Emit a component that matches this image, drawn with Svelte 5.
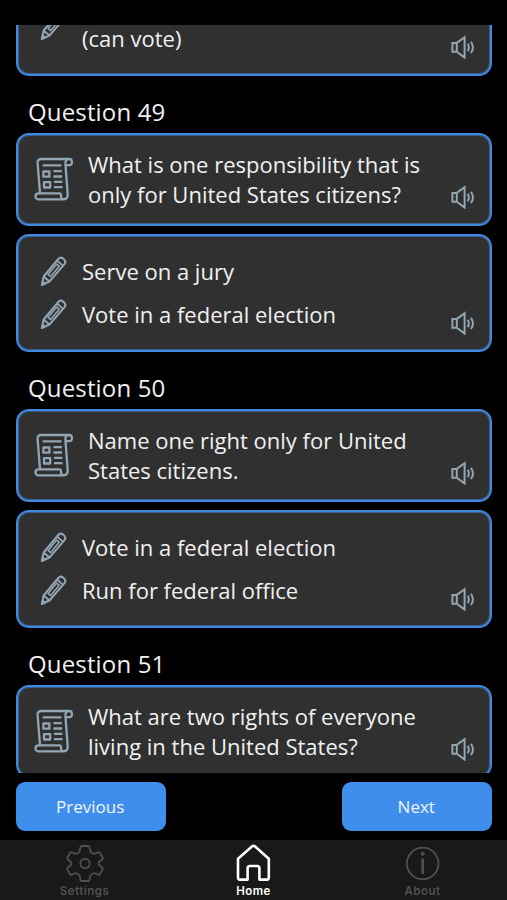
<script>
  const answersBefore = [{ text: '(can vote)', continued: true }];
  const questions = [
    {
      number: 49,
      lines: ['What is one responsibility that is', 'only for United States citizens?'],
      answers: [{ text: 'Serve on a jury' }, { text: 'Vote in a federal election' }]
    },
    {
      number: 50,
      lines: ['Name one right only for United', 'States citizens.'],
      answers: [{ text: 'Vote in a federal election' }, { text: 'Run for federal office' }]
    },
    {
      number: 51,
      lines: ['What are two rights of everyone', 'living in the United States?'],
      answers: []
    }
  ];

  // Right half of the gear outline; the left half is its mirror image.
  const gearHalf =
    'M19 2H22.2Q23.300 2 23.500 3.100L24.300 7Q24.500 8 25.300 8.500L27 9.500Q27.800 10 28.700 9.700L32.300 8.400Q33.400 8 34 9L36.600 13.500Q37.200 14.500 36.300 15.200L33.400 17.700Q32.600 18.400 32.600 19.500Q32.600 20.600 33.400 21.300L36.300 23.800Q37.200 24.500 36.600 25.500L34 30Q33.400 31 32.300 30.600L28.700 29.300Q27.800 29 27 29.500L25.300 30.500Q24.500 31 24.300 32L23.500 35.900Q23.300 37 22.200 37H19';
</script>

{#snippet speaker()}
  <svg class="speaker" viewBox="0 0 24 24" width="24" height="24">
    <path d="M1.400 7.900h4.400v8.800H1.400zM5.800 7.900 13.600 2.200v20.400L5.800 16.700" />
    <path d="M16.700 8.700c1.400 2.200 1.400 5.200 0 7.400M19.900 6.800c2.500 3.400 2.500 7.800 0 11.200" />
  </svg>
{/snippet}

{#snippet scroll()}
  <svg class="scroll" viewBox="0 0 40 44" width="40" height="44">
    <path d="M31.600 8.200h4.200c2.800 0 3.200-6.200-.6-6.200H7.400C4.600 2 3.400 3.600 3.600 6L6 36.200" />
    <path d="M35.200 2c-3 0-4 2-3.800 4.600l2.300 30.800c.2 3.200-1.600 5-4.600 5H4.800C.4 42.400.4 36.400 4.800 36.400H25.600c1.200 0 1.400 1 1.400 2.600 0 1.800.8 3.400 2.800 3.400" />
    <path d="M8.600 8.400H27.400M19.400 14.200h8.400M19.400 19.500h8.600M20 24.800h8.400M20 30.100h8.600M9.400 14.500h6v5.200h-6zM10 25.200h6.200v5.300H10z" />
  </svg>
{/snippet}

{#snippet pencil()}
  <svg class="pencil" viewBox="0 0 28 32" width="28" height="32">
    <path d="M1.800 30 3.600 21.500 18.300 4c1.300-1.500 3.300-1.600 4.800-.4l1 .9c1.500 1.300 1.600 3.200.4 4.700L9.500 26.500zM3.600 21.500 9.500 26.500" />
    <path class="groove" d="M8 19.400 16.700 9.100 19.300 11.300 10.600 21.600z" />
    <path class="cap" d="M17.500 6 22.300 10.100" />
    <path class="tip" d="M1.800 30 2.700 25.800 5.700 28.300z" />
  </svg>
{/snippet}

{#snippet answerCard(answers)}
  <section class="card answers">
    <div class="rows">
      {#each answers as answer}
        <div class="row" class:continued={answer.continued}>
          {@render pencil()}
          <span>{answer.text}</span>
        </div>
      {/each}
    </div>
    {@render speaker()}
  </section>
{/snippet}

<div class="screen">
  <main>
    <div class="previous-item">{@render answerCard(answersBefore)}</div>
    {#each questions as q}
      <h2>Question {q.number}</h2>
      <section class="card question">
        {@render scroll()}
        <p>{#each q.lines as line}<span>{line}</span>{/each}</p>
        {@render speaker()}
      </section>
      {#if q.answers.length}
        {@render answerCard(q.answers)}
      {/if}
    {/each}
  </main>

  <div class="pager">
    <button>Previous</button>
    <button>Next</button>
  </div>

  <nav>
    <div class="tab">
      <svg viewBox="0 0 38 38" width="38" height="38">
        <path d={gearHalf} />
        <path d={gearHalf} transform="translate(38 0) scale(-1 1)" />
        <circle cx="19" cy="19.500" r="4.700" />
      </svg>
      <span>Settings</span>
    </div>
    <div class="tab active">
      <svg viewBox="0 0 38 38" width="38" height="38">
        <path d="M4.800 35.600q-1.800 0-1.800-1.800V14.700L17.200 2.300q1.300-1.100 2.600 0L33.800 14.700v19.100q0 1.800-1.800 1.800h-7.600V24.300q0-2.300-2.300-2.300h-7.200q-2.300 0-2.300 2.300v11.300z" />
      </svg>
      <span>Home</span>
    </div>
    <div class="tab">
      <svg viewBox="0 0 38 38" width="38" height="38">
        <circle cx="18.700" cy="19.500" r="15.800" />
        <path class="stem" d="M18.700 14.500v15.500" />
        <circle class="dot" cx="18.700" cy="9.700" r="2" />
      </svg>
      <span>About</span>
    </div>
  </nav>
</div>

<style>
  :global(body) {
    margin: 0;
    background: #000;
  }
  .screen {
    box-sizing: border-box;
    display: flex;
    flex-direction: column;
    height: 900px;
    padding-top: 25px;
    overflow: hidden;
    background: #000;
    color: #f0f0f0;
    font-family: 'Open Sans', 'Noto Sans', sans-serif;
  }
  main {
    height: 748px;
    flex: none;
    padding: 0 15.500px 0 16px;
    box-sizing: border-box;
    overflow: hidden;
  }
  svg {
    flex: none;
    fill: none;
    stroke: #91a5b2;
    stroke-width: 2;
    stroke-linejoin: round;
    stroke-linecap: round;
  }
  .previous-item {
    margin-top: -54px;
  }
  h2 {
    height: 57px;
    margin: 0;
    padding: 19px 0 0 12px;
    box-sizing: border-box;
    font-size: 24px;
    font-weight: 400;
    line-height: 34px;
    letter-spacing: 0.15px;
  }
  .card {
    display: flex;
    box-sizing: border-box;
    border: 2px solid #4189dc;
    border-radius: 13px;
    box-shadow: inset 0 0 0 1px #39608c;
    background: #303030;
    font-size: 22px;
    line-height: 30px;
    white-space: nowrap;
  }
  .question {
    height: 93px;
    margin-bottom: 8px;
    padding: 14px 15px 15px 16px;
  }
  .question p {
    flex: 1;
    margin: 0 0 0 14px;
  }
  .question p span {
    display: block;
  }
  .scroll {
    margin-top: 8px;
    stroke-width: 2.300;
    stroke-linecap: butt;
  }
  .speaker {
    align-self: flex-end;
    stroke-linejoin: miter;
    stroke-linecap: butt;
  }
  .answers {
    padding: 13px 15px 15px 22px;
  }
  .rows {
    flex: 1;
  }
  .row {
    display: flex;
    align-items: center;
    height: 43px;
  }
  .row span {
    margin-left: 14px;
  }
  .continued {
    align-items: flex-end;
    height: 73px;
  }
  .continued .pencil {
    margin-bottom: 18px;
  }
  .continued span {
    margin-bottom: 6px;
  }
  .pager {
    display: flex;
    justify-content: space-between;
    height: 67px;
    padding: 9px 15px 0 15.500px;
    box-sizing: border-box;
  }
  button {
    width: 150.500px;
    height: 49px;
    padding: 0 1px 0 0;
    border: 0;
    border-radius: 9px;
    background: #3f8eeb;
    color: #f0f6ff;
    font: 17px 'Open Sans', 'Noto Sans', sans-serif;
  }
  nav {
    display: flex;
    height: 60px;
    background: #191919;
    color: #505050;
    font: 600 11.500px/15px Inter, 'Liberation Sans', sans-serif;
    letter-spacing: 0.500px;
  }
  .tab {
    display: flex;
    flex: 1;
    flex-direction: column;
    align-items: center;
    padding-top: 4px;
  }
  .tab svg {
    stroke: #505050;
    stroke-width: 1.800;
  }
  .tab span {
    margin-top: 2px;
  }
  .active {
    color: #fff;
  }
  .active svg {
    stroke: #fff;
    stroke-width: 2.600;
  }
  .tab .dot {
    fill: #505050;
    stroke: none;
  }
  .tab .stem {
    stroke-width: 2.600;
    stroke-linecap: butt;
  }
  .groove {
    stroke-width: 1.600;
  }
  .cap {
    stroke-width: 1.800;
  }
  .tip {
    fill: #91a5b2;
    stroke-width: 1;
  }
</style>
